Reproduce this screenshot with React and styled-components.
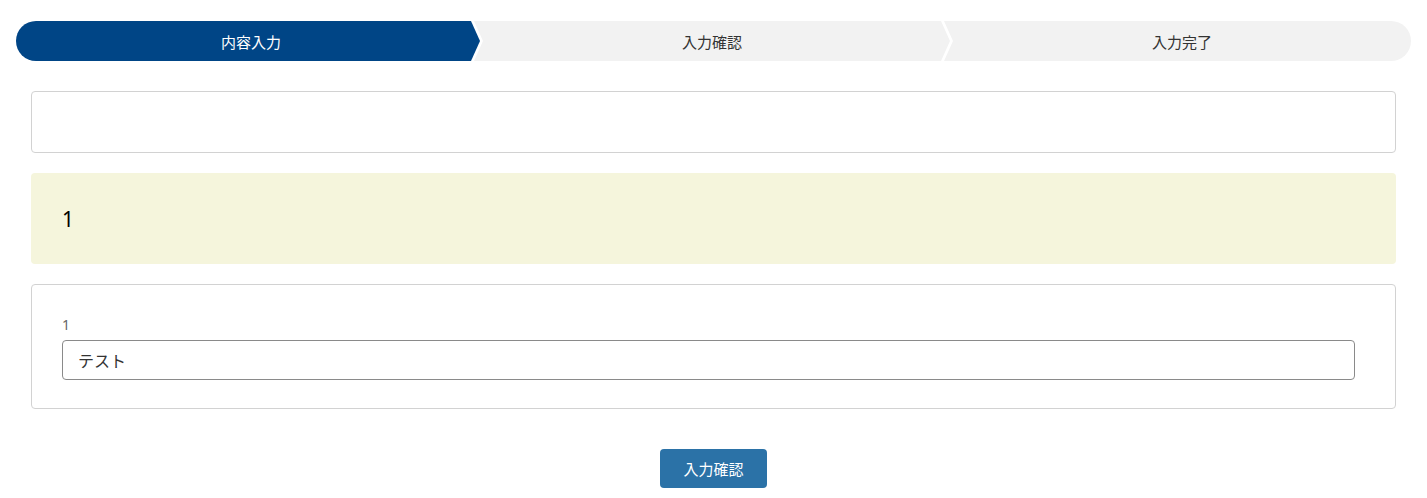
import React from 'react';
import styled, { createGlobalStyle } from 'styled-components';

const GlobalStyle = createGlobalStyle`
	body {
		margin: 0;
		background: #fff;
		font-family: 'Noto Sans', 'Noto Sans CJK JP', sans-serif;
		color: #333;
	}
`;

const Page = styled.div`
	padding: 21px 16px 10px;
`;

const StepBar = styled.div`
	display: flex;
	height: 40px;
`;

const Step = styled.div`
	flex: 1;
	display: flex;
	align-items: center;
	justify-content: center;
	font-size: 15px;
	background: ${props => (props.active ? '#004586' : '#f2f2f2')};
	color: ${props => (props.active ? '#fff' : '#333')};
	margin-left: ${props => (props.first ? '0' : '-6px')};
	border-radius: ${props => (props.first ? '20px 0 0 20px' : props.last ? '0 20px 20px 0' : '0')};
	padding-left: ${props => (props.first ? '6px' : '9px')};
	padding-right: ${props => (props.last || props.first ? '0' : '9px')};
	clip-path: ${props =>
		props.first
			? 'polygon(0 0, calc(100% - 9px) 0, 100% 50%, calc(100% - 9px) 100%, 0 100%)'
			: props.last
			? 'polygon(0 0, 100% 0, 100% 100%, 0 100%, 9px 50%)'
			: 'polygon(0 0, calc(100% - 9px) 0, 100% 50%, calc(100% - 9px) 100%, 0 100%, 9px 50%)'};
`;

const Content = styled.div`
	padding: 30px 15px 0;
	display: flex;
	flex-direction: column;
	gap: 20px;
`;

const Card = styled.div`
	border: 1px solid #d2d2d2;
	border-radius: 4px;
	background: #fff;
	min-height: ${props => props.height || 0}px;
	box-sizing: border-box;
`;

const Notice = styled.div`
	height: 91px;
	box-sizing: border-box;
	background: #f5f5dc;
	border-radius: 4px;
	display: flex;
	align-items: center;
	padding-left: 31px;
	font-size: 21px;
	color: #000;
`;

const FieldCard = styled(Card)`
	padding: 30px 40px 28px 30px;
`;

const Label = styled.div`
	font-size: 14px;
	line-height: 20px;
	color: #666;
	margin-bottom: 5px;
`;

const Input = styled.input`
	display: block;
	width: 100%;
	height: 40px;
	box-sizing: border-box;
	border: 1px solid #8a8a8a;
	border-radius: 4px;
	padding: 0 15px;
	font-family: inherit;
	font-size: 16px;
	color: #333;
	outline: none;
`;

const Actions = styled.div`
	display: flex;
	justify-content: center;
	padding-top: 20px;
`;

const Button = styled.button`
	width: 107px;
	height: 39px;
	border: none;
	border-radius: 4px;
	background: #2b72a7;
	color: #fff;
	font-family: inherit;
	font-size: 15px;
	cursor: pointer;
`;

const steps = ['内容入力', '入力確認', '入力完了'];

const App = () => (
	<Page>
		<GlobalStyle />
		<StepBar>
			{steps.map((s, i) => (
				<Step key={s} active={i === 0} first={i === 0} last={i === steps.length - 1}>
					{s}
				</Step>
			))}
		</StepBar>
		<Content>
			<Card height={62} />
			<Notice>1</Notice>
			<FieldCard>
				<Label>1</Label>
				<Input defaultValue='テスト' />
			</FieldCard>
			<Actions>
				<Button>入力確認</Button>
			</Actions>
		</Content>
	</Page>
);

export default App;
